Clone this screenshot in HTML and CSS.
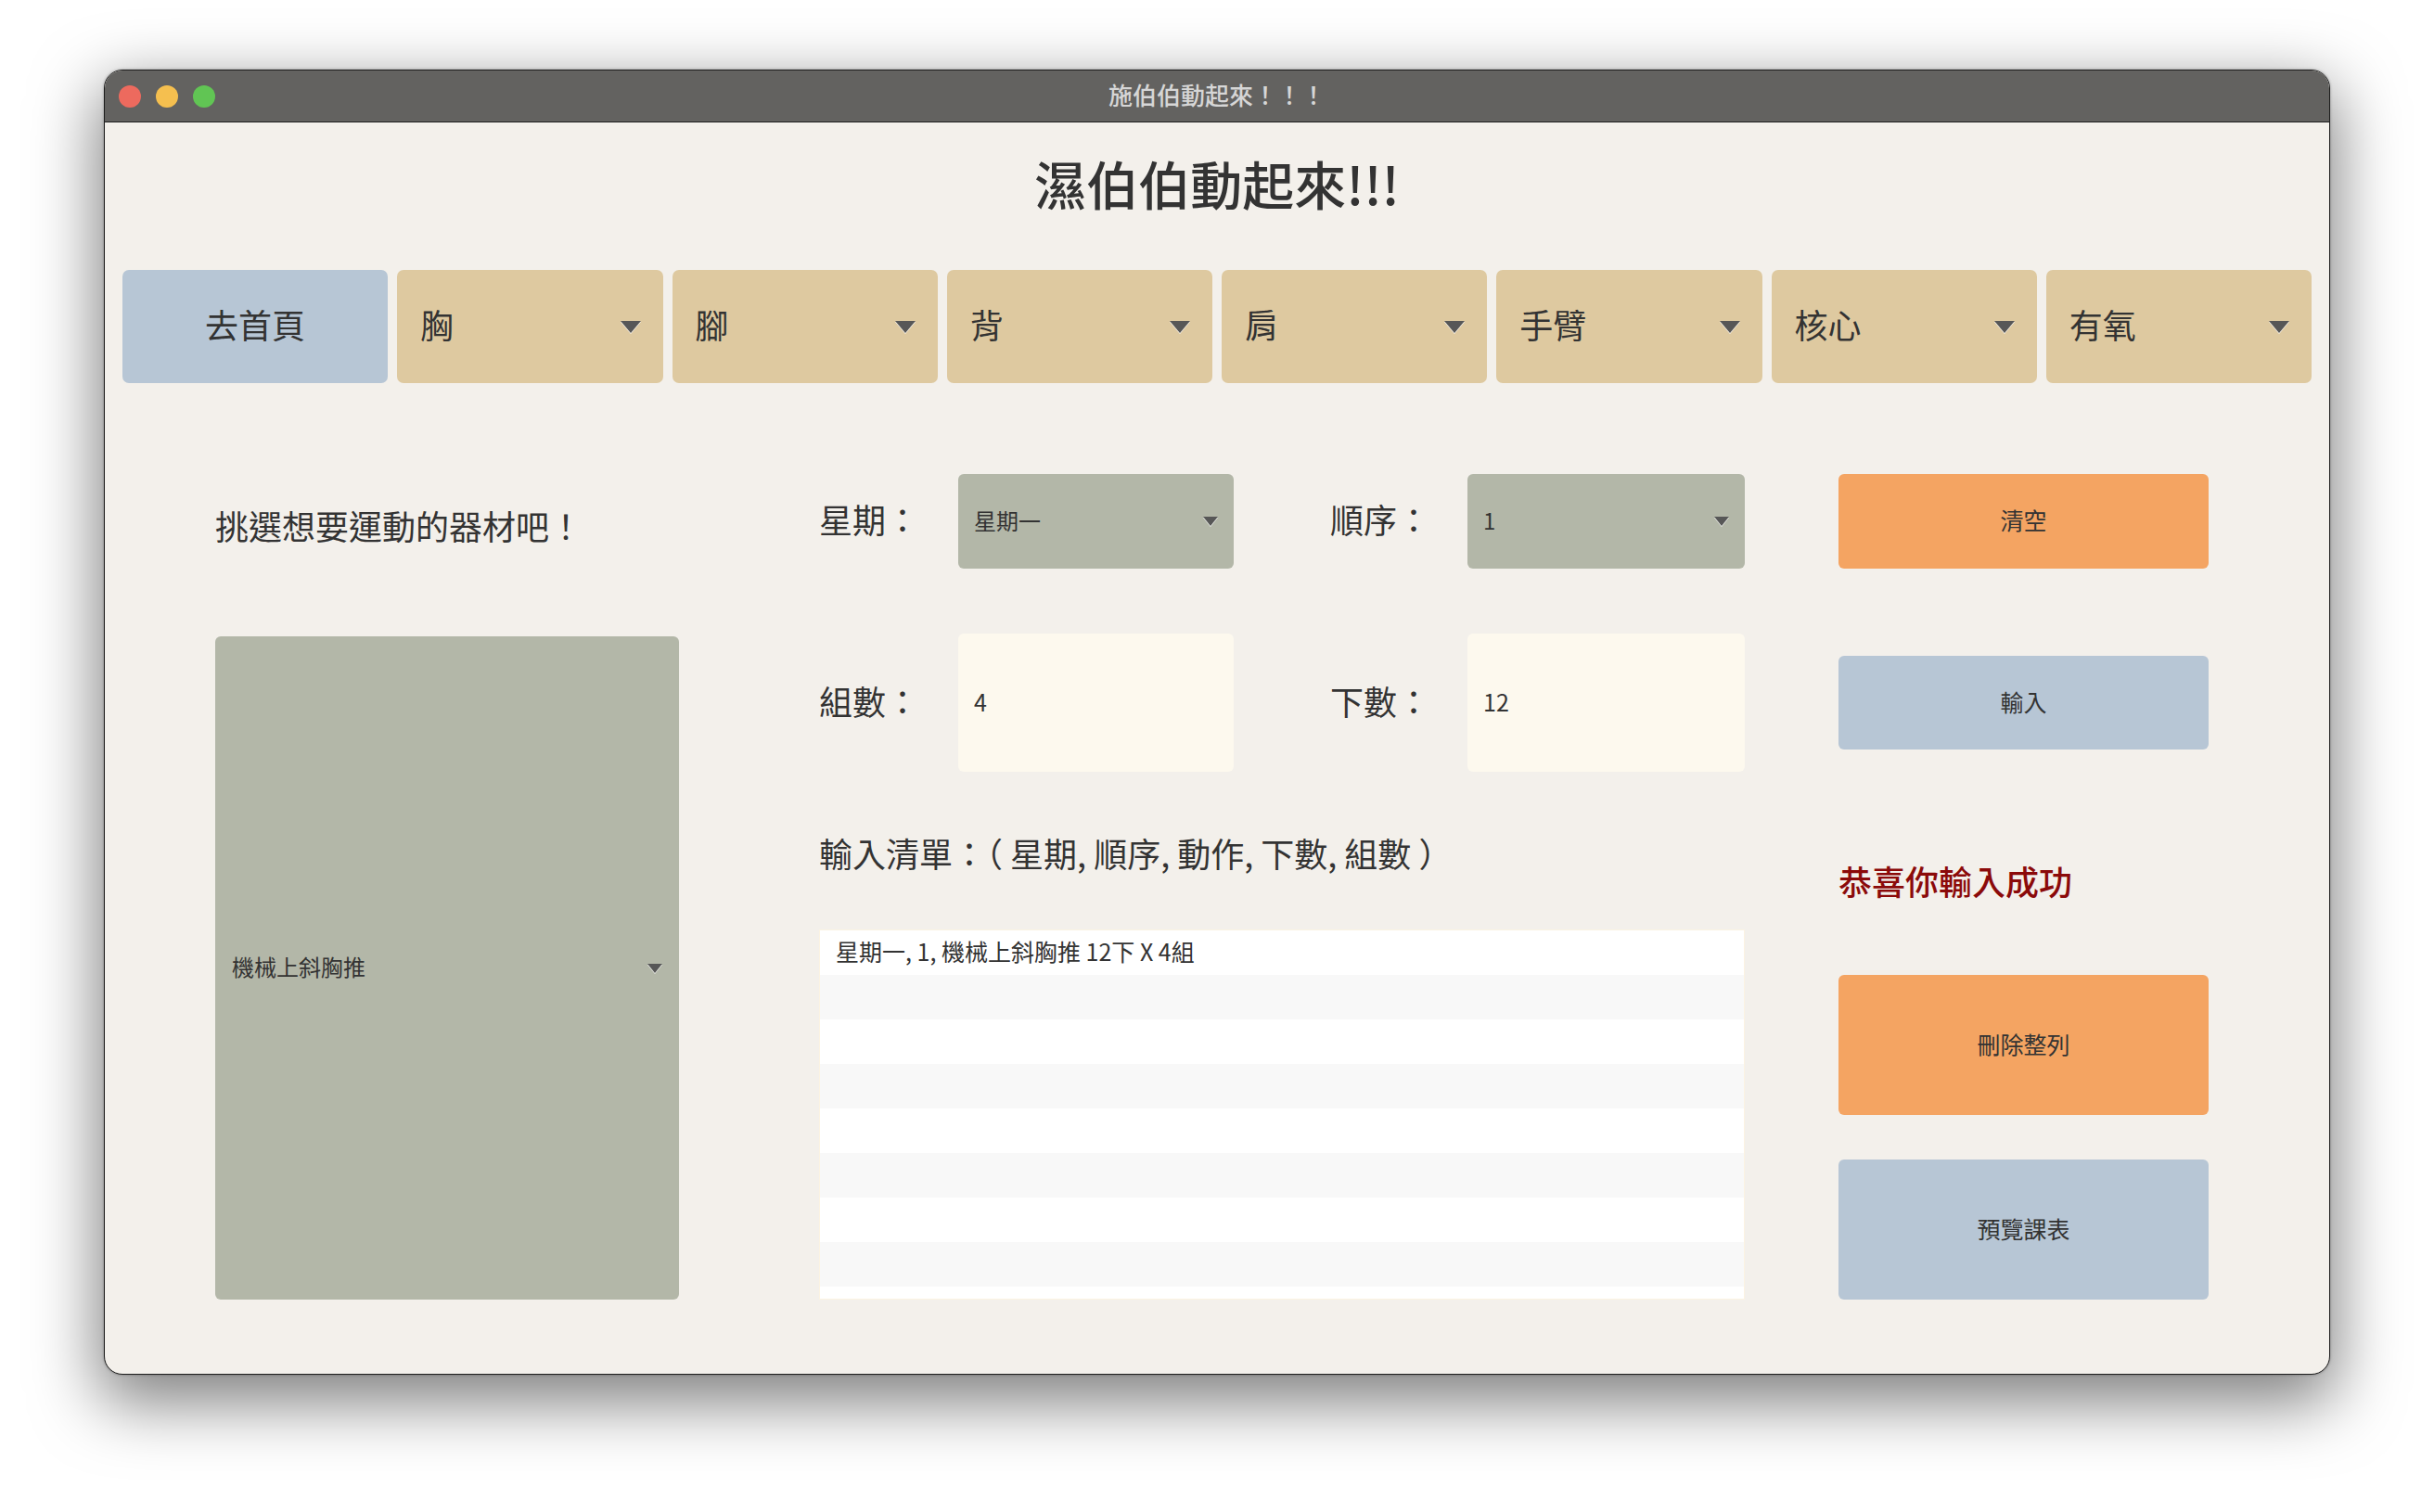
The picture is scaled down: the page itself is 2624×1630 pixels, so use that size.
FILE: index.html
```html
<!DOCTYPE html>
<html lang="zh-Hant">
<head>
<meta charset="utf-8">
<title>施伯伯動起來！！！</title>
<link rel="stylesheet" href="styles.css">
</head>
<body>
<div class="window">
  <div class="titlebar">
    <div class="lights">
      <span class="light red"></span>
      <span class="light yellow"></span>
      <span class="light green"></span>
    </div>
    <div class="win-title">施伯伯動起來！！！</div>
    <div></div>
  </div>
  <div class="content">
    <h1 class="heading">濕伯伯動起來!!!</h1>
    <nav class="nav">
      <div class="nav-item home">去首頁</div>
      <div class="nav-item menu"><span>胸</span><svg class="caret-lg" viewBox="0 0 22 13"><polygon points="0,0 22,0 11,13"/></svg></div>
      <div class="nav-item menu"><span>腳</span><svg class="caret-lg" viewBox="0 0 22 13"><polygon points="0,0 22,0 11,13"/></svg></div>
      <div class="nav-item menu"><span>背</span><svg class="caret-lg" viewBox="0 0 22 13"><polygon points="0,0 22,0 11,13"/></svg></div>
      <div class="nav-item menu"><span>肩</span><svg class="caret-lg" viewBox="0 0 22 13"><polygon points="0,0 22,0 11,13"/></svg></div>
      <div class="nav-item menu"><span>手臂</span><svg class="caret-lg" viewBox="0 0 22 13"><polygon points="0,0 22,0 11,13"/></svg></div>
      <div class="nav-item menu"><span>核心</span><svg class="caret-lg" viewBox="0 0 22 13"><polygon points="0,0 22,0 11,13"/></svg></div>
      <div class="nav-item menu"><span>有氧</span><svg class="caret-lg" viewBox="0 0 22 13"><polygon points="0,0 22,0 11,13"/></svg></div>
    </nav>
    <main class="form-grid">
      <div class="intro">挑選想要運動的器材吧！</div>

      <div class="label c3 r1">星期：</div>
      <div class="select c4 r1"><span>星期一</span><svg class="caret-sm" viewBox="0 0 16 10"><polygon points="0,0 16,0 8,10"/></svg></div>
      <div class="label c6 r1">順序：</div>
      <div class="select c7 r1"><span>1</span><svg class="caret-sm" viewBox="0 0 16 10"><polygon points="0,0 16,0 8,10"/></svg></div>
      <div class="btn orange c9 r1">清空</div>

      <div class="equip-select"><span>機械上斜胸推</span><svg class="caret-sm" viewBox="0 0 16 10"><polygon points="0,0 16,0 8,10"/></svg></div>

      <div class="label c3 r3">組數：</div>
      <div class="input c4 r3">4</div>
      <div class="label c6 r3">下數：</div>
      <div class="input c7 r3">12</div>
      <div class="btn blue submit c9 r3">輸入</div>

      <div class="label list-label">輸入清單：（ 星期, 順序, 動作, 下數, 組數 ）</div>
      <div class="success">恭喜你輸入成功</div>

      <div class="list">
        <div class="row">星期一, 1, 機械上斜胸推 12下 X 4組</div>
        <div class="row"></div>
        <div class="row"></div>
        <div class="row"></div>
        <div class="row"></div>
        <div class="row"></div>
        <div class="row"></div>
        <div class="row"></div>
      </div>

      <div class="btn-stack">
        <div class="btn orange big">刪除整列</div>
        <div class="btn blue big">預覽課表</div>
      </div>
    </main>
  </div>
</div>
</body>
</html>
```

FILE: styles.css
```css
* { box-sizing: border-box; }

html, body {
  margin: 0;
  padding: 0;
  background: #ffffff;
}

body {
  font-family: "Noto Sans CJK TC", "Noto Sans", sans-serif;
  color: #333333;
  padding: 75px 0 0 112px;
  width: 2624px;
  height: 1630px;
  overflow: hidden;
}

.window {
  width: 2400px;
  height: 1407px;
  border: 1px solid #1e1e1e;
  border-radius: 20px;
  overflow: hidden;
  background: #f3f0eb;
  box-shadow: 0 24px 70px 6px rgba(0, 0, 0, 0.5), 0 0 3px rgba(0, 0, 0, 0.35);
  display: flex;
  flex-direction: column;
}

.titlebar {
  height: 56px;
  flex: none;
  background: #636260;
  border-bottom: 1px solid #1c1c1c;
  display: grid;
  grid-template-columns: 1fr auto 1fr;
  align-items: center;
}

.lights {
  display: flex;
  gap: 16px;
  padding-left: 15px;
  padding-top: 1px;
}

.light {
  width: 24px;
  height: 24px;
  border-radius: 50%;
  display: block;
}
.light.red { background: #ed6a5e; }
.light.yellow { background: #f5bf4f; }
.light.green { background: #61c554; }

.win-title {
  font-size: 26px;
  color: #d6d6d6;
  font-weight: 500;
  line-height: 1;
  padding-bottom: 3px;
}

.content {
  flex: 1;
  display: flex;
  flex-direction: column;
}

.heading {
  margin: 31px 0 0 0;
  height: 68px;
  font-size: 56px;
  line-height: 68px;
  font-weight: 500;
  text-align: center;
  color: #333333;
}

.nav {
  margin-top: 60px;
  padding: 0 19px;
  display: grid;
  grid-template-columns: repeat(8, 1fr);
  gap: 10px;
  height: 122px;
}

.nav-item {
  border-radius: 7px;
  font-size: 36px;
  color: #333333;
  display: flex;
  align-items: center;
  padding-bottom: 6px;
}

.nav-item.home {
  background: #b7c6d5;
  justify-content: center;
}

.nav-item.menu {
  background: #dec9a0;
  justify-content: space-between;
  padding: 0 24px 6px 25px;
}

.nav-item svg {
  margin-top: 6px;
}

.caret-lg {
  width: 22px;
  height: 13px;
  fill: #575757;
  filter: drop-shadow(0 1px 0 rgba(255, 255, 255, 0.85));
}

.caret-sm {
  width: 16px;
  height: 10px;
  fill: #575757;
  filter: drop-shadow(0 1px 0 rgba(255, 255, 255, 0.85));
}

.form-grid {
  margin-top: 98px;
  padding-left: 119px;
  display: grid;
  grid-template-columns: 500px 151px 150px 297px 104px 148px 299px 101px 399px;
  grid-template-rows: 102px 70px 149px 170px 399px;
}

.c3 { grid-column: 3; }
.c4 { grid-column: 4; }
.c6 { grid-column: 6; }
.c7 { grid-column: 7; }
.c9 { grid-column: 9; }
.r1 { grid-row: 1; }
.r3 { grid-row: 3; }

.intro {
  grid-column: 1;
  grid-row: 1;
  align-self: center;
  padding-top: 8px;
  font-size: 36px;
  line-height: 1.3;
  white-space: nowrap;
}

.label {
  font-size: 36px;
  line-height: 1.3;
  align-self: center;
  white-space: nowrap;
  padding-bottom: 5px;
}

.select {
  background: #b3b7a8;
  border-radius: 6px;
  display: flex;
  align-items: center;
  justify-content: space-between;
  padding: 0 17px 4px 17px;
  font-size: 24px;
}

.select svg,
.equip-select svg {
  margin-top: 4px;
}

.input {
  background: #fdf9ee;
  border-radius: 6px;
  display: flex;
  align-items: center;
  padding: 0 17px 4px 17px;
  font-size: 25px;
}

.btn {
  border-radius: 6px;
  display: flex;
  align-items: center;
  justify-content: center;
  font-size: 25px;
  color: #333333;
  padding-bottom: 4px;
}
.btn.orange { background: #f4a462; }
.btn.blue { background: #b7c6d5; }

.btn.submit {
  align-self: center;
  height: 101px;
}

.btn.big {
  height: 152px;
}

.equip-select {
  grid-column: 1;
  grid-row: 3 / 6;
  margin-top: 3px;
  background: #b3b7a8;
  border-radius: 6px;
  display: flex;
  align-items: center;
  justify-content: space-between;
  padding: 0 18px 4px 18px;
  font-size: 24px;
}

.list-label {
  grid-column: 3 / 8;
  grid-row: 4;
  padding-bottom: 0;
  padding-top: 4px;
}

.success {
  grid-column: 9;
  grid-row: 4;
  align-self: start;
  margin-top: 92px;
  font-size: 36px;
  line-height: 50px;
  font-weight: 500;
  color: #8b0a0a;
}

.list {
  grid-column: 3 / 8;
  grid-row: 5;
  background: #ffffff;
  border: 1px solid #fbf3e2;
  display: flex;
  flex-direction: column;
}

.list .row {
  height: 48px;
  flex: none;
  padding-left: 17px;
  font-size: 25px;
  line-height: 44px;
  background: #ffffff;
}

.list .row:nth-child(even) {
  background: #f8f8f8;
}

.btn-stack {
  grid-column: 9;
  grid-row: 5;
  padding-top: 49px;
  display: flex;
  flex-direction: column;
  gap: 48px;
}
```
